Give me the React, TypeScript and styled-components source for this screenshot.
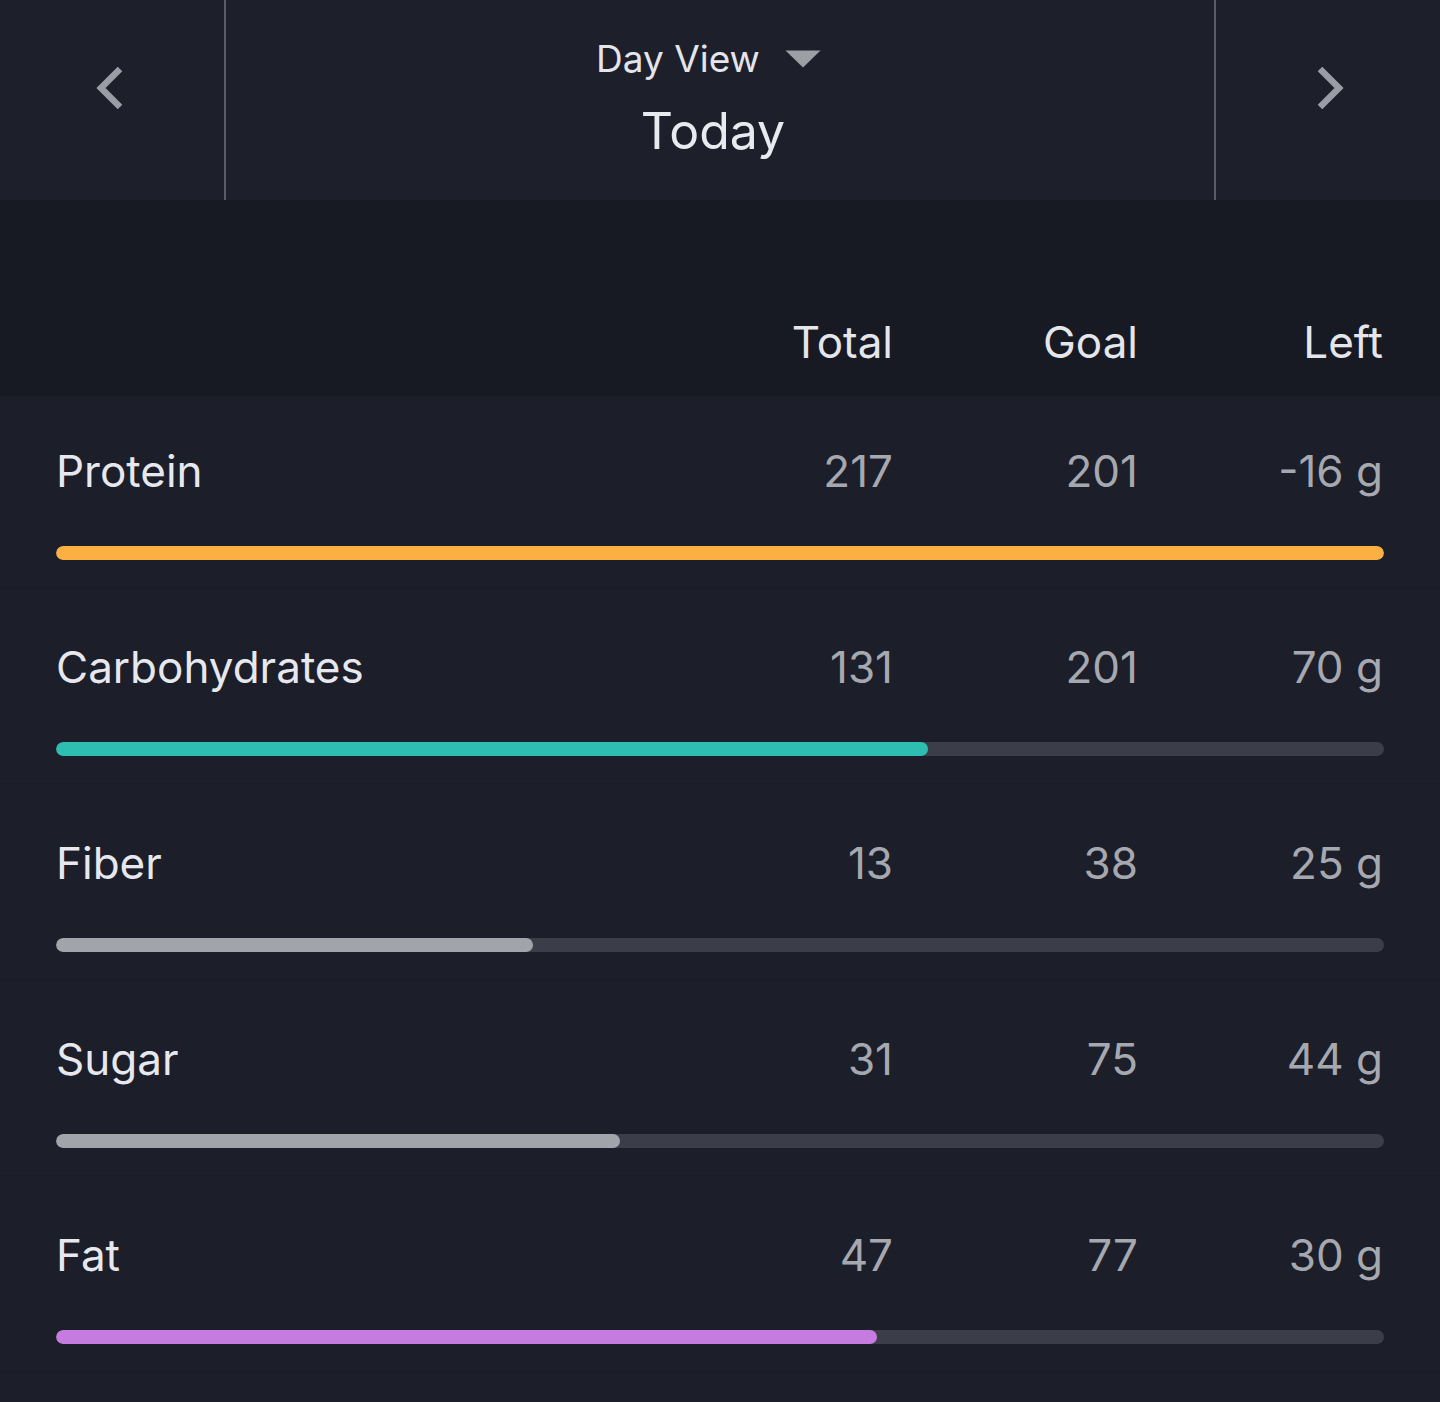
import React from "react";
import styled, { createGlobalStyle } from "styled-components";

const Global = createGlobalStyle`
  html, body { margin: 0; padding: 0; background: #1c1e2a; }
  body { font-family: Inter, "Noto Sans", sans-serif; -webkit-font-smoothing: antialiased; }
  * { box-sizing: border-box; }
`;

const Page = styled.div`
  width: 1440px;
  min-height: 1402px;
  background: #1c1e2a;
  display: flex;
  flex-direction: column;
`;

const TopBar = styled.header`
  height: 200px;
  display: grid;
  grid-template-columns: 226px 1fr 226px;
  background: #1d1f2b;
`;

const NavButton = styled.button<{ $side: "left" | "right" }>`
  border: none;
  background: transparent;
  display: flex;
  align-items: flex-start;
  justify-content: center;
  padding: 64px 0 0 0;
  cursor: pointer;
  ${(p) => (p.$side === "left" ? "border-right: 2px solid #595c69;" : "border-left: 2px solid #595c69;")}
`;

const Center = styled.div`
  display: flex;
  flex-direction: column;
  align-items: center;
  padding-top: 33px;
`;

const ViewSelect = styled.div`
  display: flex;
  align-items: center;
  gap: 25px;
  color: #e3e5eb;
  font-size: 37px;
  line-height: 52px;
  margin-right: 23px;
`;

const TodayLabel = styled.div`
  color: #e8eaef;
  font-size: 50px;
  line-height: 60px;
  margin-top: 16px;
  margin-right: 14px;
`;

const ColumnHead = styled.div`
  height: 196px;
  background: #171923;
  display: grid;
  grid-template-columns: 1fr 245px 245px 245px;
  align-items: end;
  padding: 0 57px 29px 56px;
`;

const HeadCell = styled.div`
  text-align: right;
  color: #e4e6ec;
  font-size: 44px;
  line-height: 50px;
`;

const Row = styled.div<{ $first?: boolean }>`
  height: ${(p) => (p.$first ? 192 : 196)}px;
  padding: ${(p) => (p.$first ? 48 : 52)}px 56px 0 56px;
  border-bottom: 1px solid #191b26;
  display: flex;
  flex-direction: column;
`;

const RowLine = styled.div`
  display: grid;
  grid-template-columns: 1fr 245px 245px 245px;
  align-items: center;
  height: 54px;
  padding-right: 1px;
`;

const Name = styled.div`
  color: #e6e8ee;
  font-size: 44px;
  line-height: 54px;
`;

const Num = styled.div`
  text-align: right;
  color: #a6a8b0;
  font-size: 44px;
  line-height: 54px;
`;

const Track = styled.div`
  margin-top: 48px;
  height: 14px;
  border-radius: 7px;
  background: #3b3e49;
  overflow: hidden;
`;

const Fill = styled.div<{ $color: string }>`
  height: 100%;
  border-radius: 7px;
  background: ${(p) => p.$color};
`;

const Chevron = ({ dir }: { dir: "left" | "right" }) => (
  <svg width="40" height="48" viewBox="0 0 40 48" fill="none">
    <path
      d={dir === "left" ? "M28 5 L9 24 L28 43" : "M12 5 L31 24 L12 43"}
      stroke="#9a9ca6"
      strokeWidth="6.5"
      strokeLinecap="butt"
      strokeLinejoin="miter"
    />
  </svg>
);

const Caret = () => (
  <svg width="36" height="18" viewBox="0 0 36 18">
    <path d="M0.5 0.5 H35.5 L18 17.5 Z" fill="#9d9fa6" />
  </svg>
);

const rows = [
  { name: "Protein", total: "217", goal: "201", left: "-16 g", pct: 100, color: "#fdb042" },
  { name: "Carbohydrates", total: "131", goal: "201", left: "70 g", pct: 65.7, color: "#2ebdb1" },
  { name: "Fiber", total: "13", goal: "38", left: "25 g", pct: 35.9, color: "#a2a4ab" },
  { name: "Sugar", total: "31", goal: "75", left: "44 g", pct: 42.5, color: "#a2a4ab" },
  { name: "Fat", total: "47", goal: "77", left: "30 g", pct: 61.8, color: "#c67be1" },
];

export default function App() {
  return (
    <Page>
      <Global />
      <TopBar>
        <NavButton $side="left" aria-label="Previous day">
          <Chevron dir="left" />
        </NavButton>
        <Center>
          <ViewSelect>
            <span>Day View</span>
            <Caret />
          </ViewSelect>
          <TodayLabel>Today</TodayLabel>
        </Center>
        <NavButton $side="right" aria-label="Next day">
          <Chevron dir="right" />
        </NavButton>
      </TopBar>
      <ColumnHead>
        <div />
        <HeadCell>Total</HeadCell>
        <HeadCell>Goal</HeadCell>
        <HeadCell>Left</HeadCell>
      </ColumnHead>
      {rows.map((r, i) => (
        <Row key={r.name} $first={i === 0}>
          <RowLine>
            <Name>{r.name}</Name>
            <Num>{r.total}</Num>
            <Num>{r.goal}</Num>
            <Num>{r.left}</Num>
          </RowLine>
          <Track>
            <Fill $color={r.color} style={{ width: `${r.pct}%` }} />
          </Track>
        </Row>
      ))}
    </Page>
  );
}
